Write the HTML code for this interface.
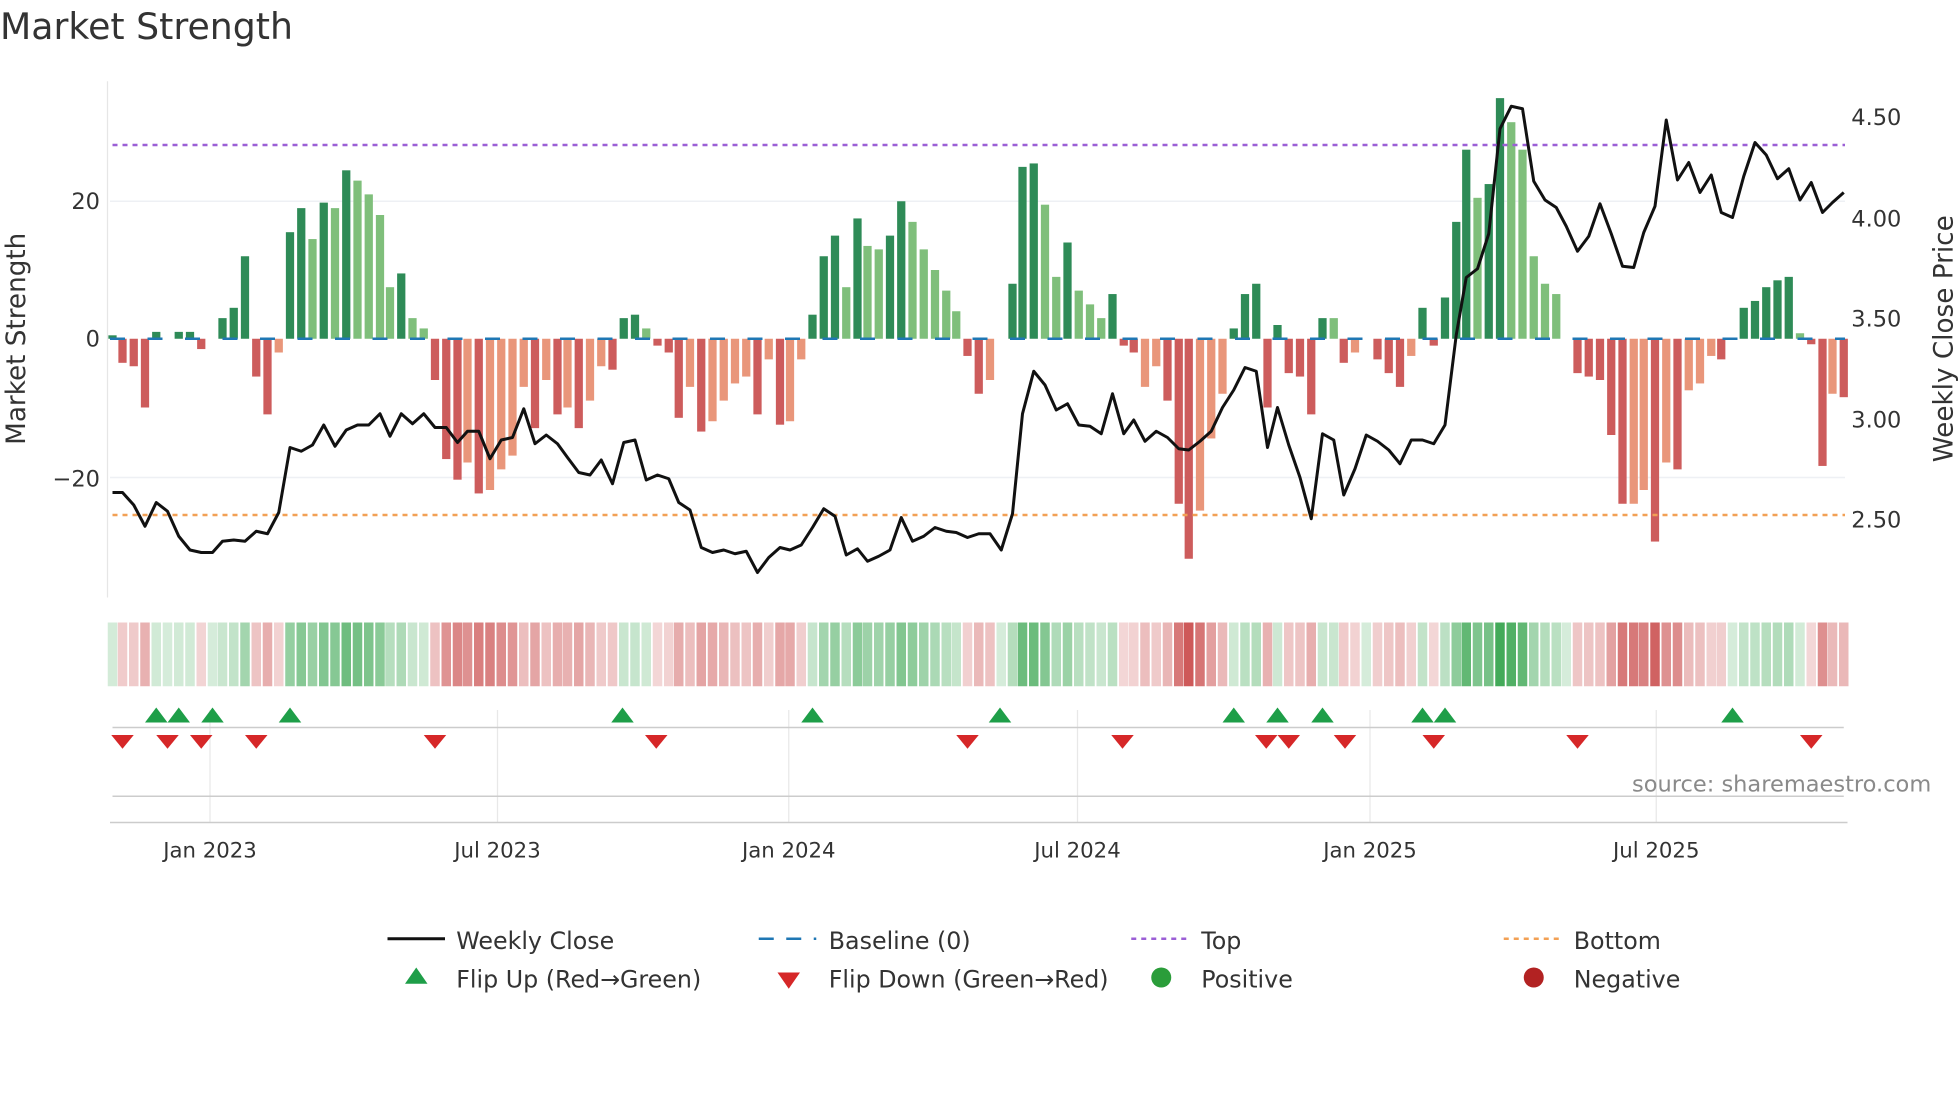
<!DOCTYPE html>
<html><head><meta charset="utf-8"><style>
html,body{margin:0;padding:0;background:#fff;}
svg{display:block;font-family:"DejaVu Sans","Liberation Sans",sans-serif;}
</style></head><body>
<svg id="s" width="1960" height="1102" viewBox="0 0 1568 881.6" xmlns="http://www.w3.org/2000/svg">
<rect width="1568" height="882" fill="#fff"/>
<text x="0" y="31" font-size="29" fill="#333">Market Strength</text>
<line x1="86" y1="65" x2="86" y2="478" stroke="#e6e6e6" stroke-width="1"/>
<line x1="88" y1="161" x2="1476" y2="161" stroke="#eef0f4" stroke-width="1.2"/>
<line x1="88" y1="382" x2="1476" y2="382" stroke="#eef0f4" stroke-width="1.2"/>
<g id="bars"></g>
<line x1="88" y1="271" x2="1476" y2="271" stroke="#1f77b4" stroke-width="2" stroke-dasharray="12,18"/>
<line x1="90" y1="116" x2="1476" y2="116" stroke="#9b5fd6" stroke-width="2" stroke-dasharray="4,4"/>
<line x1="90" y1="412" x2="1476" y2="412" stroke="#f2a055" stroke-width="2" stroke-dasharray="4,4"/>
<polyline id="price" fill="none" stroke="#111" stroke-width="2.4" stroke-linejoin="round"/>
<g font-size="18" fill="#333">
<text x="80" y="167" text-anchor="end">20</text>
<text x="80" y="277" text-anchor="end">0</text>
<text x="80" y="389" text-anchor="end">−20</text>
<text x="1481" y="100">4.50</text>
<text x="1481" y="181">4.00</text>
<text x="1481" y="261">3.50</text>
<text x="1481" y="342">3.00</text>
<text x="1481" y="422">2.50</text>
</g>
<text transform="translate(20,271) rotate(-90)" text-anchor="middle" font-size="21" fill="#333">Market Strength</text>
<text transform="translate(1562,271) rotate(-90)" text-anchor="middle" font-size="21" fill="#333">Weekly Close Price</text>
<g id="heat"></g>
<g stroke="#e8e8e8" stroke-width="1">
<line x1="168" y1="568" x2="168" y2="658"/><line x1="398" y1="568" x2="398" y2="658"/>
<line x1="631" y1="568" x2="631" y2="658"/><line x1="862" y1="568" x2="862" y2="658"/>
<line x1="1096" y1="568" x2="1096" y2="658"/><line x1="1325" y1="568" x2="1325" y2="658"/>
</g>
<line x1="90" y1="582" x2="1475" y2="582" stroke="#ccc" stroke-width="1.2"/>
<line x1="90" y1="637" x2="1475" y2="637" stroke="#ccc" stroke-width="1.2"/>
<line x1="88" y1="658" x2="1478" y2="658" stroke="#ccc" stroke-width="1.2"/>
<g id="flips"></g>
<text x="1545" y="633" text-anchor="end" font-size="18" fill="#8a8a8a">source: sharemaestro.com</text>
<g font-size="17" fill="#333" text-anchor="middle">
<text x="168" y="686">Jan 2023</text><text x="398" y="686">Jul 2023</text>
<text x="631" y="686">Jan 2024</text><text x="862" y="686">Jul 2024</text>
<text x="1096" y="686">Jan 2025</text><text x="1325" y="686">Jul 2025</text>
</g>
<g font-size="19" fill="#333">
<line x1="310" y1="751" x2="356" y2="751" stroke="#111" stroke-width="2.4"/>
<text x="365" y="759">Weekly Close</text>
<line x1="607" y1="751" x2="653" y2="751" stroke="#1f77b4" stroke-width="2" stroke-dasharray="12,10"/>
<text x="663" y="759">Baseline (0)</text>
<line x1="905" y1="751" x2="951" y2="751" stroke="#9b5fd6" stroke-width="2" stroke-dasharray="4,4"/>
<text x="961" y="759">Top</text>
<line x1="1203" y1="751" x2="1249" y2="751" stroke="#f2a055" stroke-width="2" stroke-dasharray="4,4"/>
<text x="1259" y="759">Bottom</text>
<polygon points="333,774 342,787 324,787" fill="#1e9e48"/>
<text x="365" y="790">Flip Up (Red→Green)</text>
<polygon points="622,778 640,778 631,791" fill="#d62728"/>
<text x="663" y="790">Flip Down (Green→Red)</text>
<circle cx="929" cy="782" r="8" fill="#2a9d3a"/>
<text x="961" y="790">Positive</text>
<circle cx="1227" cy="782" r="8" fill="#b22222"/>
<text x="1259" y="790">Negative</text>
</g>
</svg>
<script>
var B=[[90,.5,'d'],[98,-3.5,'r'],[107,-4,'r'],[116,-10,'r'],[125,1,'d'],[134,0,'d'],[143,1,'d'],[152,1,'d'],[161,-1.5,'r'],[170,0,'l'],[178,3,'d'],[187,4.5,'d'],[196,12,'d'],[205,-5.5,'r'],[214,-11,'r'],[223,-2,'s'],[232,15.5,'d'],[241,19,'d'],[250,14.5,'l'],[259,19.8,'d'],[268,19,'l'],[277,24.5,'d'],[286,23,'l'],[295,21,'l'],[304,18,'l'],[312,7.5,'l'],[321,9.5,'d'],[330,3,'l'],[339,1.5,'l'],[348,-6,'r'],[357,-17.5,'r'],[366,-20.5,'r'],[374,-18,'s'],[383,-22.5,'r'],[392,-22,'s'],[401,-19,'s'],[410,-17,'s'],[419,-7,'s'],[428,-13,'r'],[437,-6,'s'],[446,-11,'r'],[454,-10,'s'],[463,-13,'r'],[472,-9,'s'],[481,-4,'s'],[490,-4.5,'r'],[499,3,'d'],[508,3.5,'d'],[517,1.5,'l'],[526,-1,'r'],[535,-2,'r'],[543,-11.5,'r'],[552,-7,'s'],[561,-13.5,'r'],[570,-12,'s'],[579,-9,'s'],[588,-6.5,'s'],[597,-5.5,'s'],[606,-11,'r'],[615,-3,'s'],[624,-12.5,'r'],[632,-12,'s'],[641,-3,'s'],[650,3.5,'d'],[659,12,'d'],[668,15,'d'],[677,7.5,'l'],[686,17.5,'d'],[694,13.5,'l'],[703,13,'l'],[712,15,'d'],[721,20,'d'],[730,17,'l'],[739,13,'l'],[748,10,'l'],[757,7,'l'],[765,4,'l'],[774,-2.5,'r'],[783,-8,'r'],[792,-6,'s'],[801,0,'s'],[810,8,'d'],[818,25,'d'],[827,25.5,'d'],[836,19.5,'l'],[845,9,'l'],[854,14,'d'],[863,7,'l'],[872,5,'l'],[881,3,'l'],[890,6.5,'d'],[899,-1,'r'],[907,-2,'r'],[916,-7,'s'],[925,-4,'s'],[934,-9,'r'],[943,-24,'r'],[951,-32,'r'],[960,-25,'s'],[969,-14.5,'s'],[978,-8,'s'],[987,1.5,'d'],[996,6.5,'d'],[1005,8,'d'],[1014,-10,'r'],[1022,2,'d'],[1031,-5,'r'],[1040,-5.5,'r'],[1049,-11,'r'],[1058,3,'d'],[1067,3,'l'],[1075,-3.5,'r'],[1084,-2,'s'],[1093,0,'s'],[1102,-3,'r'],[1111,-5,'r'],[1120,-7,'r'],[1129,-2.5,'s'],[1138,4.5,'d'],[1147,-1,'r'],[1156,6,'d'],[1165,17,'d'],[1173,27.5,'d'],[1182,20.5,'l'],[1191,22.5,'d'],[1200,35,'d'],[1209,31.5,'l'],[1218,27.5,'l'],[1227,12,'l'],[1236,8,'l'],[1245,6.5,'l'],[1253,0,'l'],[1262,-5,'r'],[1271,-5.5,'r'],[1280,-6,'r'],[1289,-14,'r'],[1298,-24,'r'],[1307,-24,'s'],[1315,-22,'s'],[1324,-29.5,'r'],[1333,-18,'s'],[1342,-19,'r'],[1351,-7.5,'s'],[1360,-6.5,'s'],[1369,-2.5,'s'],[1377,-3,'r'],[1386,0,'d'],[1395,4.5,'d'],[1404,5.5,'d'],[1413,7.5,'d'],[1422,8.5,'d'],[1431,9,'d'],[1440,.8,'l'],[1449,-.8,'r'],[1458,-18.5,'r'],[1466,-8,'s'],[1475,-8.5,'r']];
var C={d:'#2e8b57',l:'#7fbf7b',r:'#cd5c5c',s:'#e9967a'};
var NS='http://www.w3.org/2000/svg',bars=document.getElementById('bars'),heat=document.getElementById('heat');
function R(g,x,y,w,h,f){var r=document.createElementNS(NS,'rect');r.setAttribute('x',x);r.setAttribute('y',y);r.setAttribute('width',w);r.setAttribute('height',h);r.setAttribute('fill',f);g.appendChild(r);}
B.forEach(function(b){var h=Math.abs(b[1])*5.5;if(h>0)R(bars,b[0]-3.3,b[1]>0?271-h:271,6.6,h,C[b[2]]);
var v=b[1],col;
if(v>=0){col='rgba(46,160,70,'+(0.2+0.7*Math.min(1,v/35))+')';}else{col='rgba(200,70,70,'+(0.2+0.7*Math.min(1,-v/32))+')';}
R(heat,b[0]-3.8,498,7.6,51,col);});
var P=[[90,394],[98,394],[107,404],[116,421],[125,402],[134,409],[143,429],[152,440],[161,442],[170,442],[178,433],[187,432],[196,433],[205,425],[214,427],[223,410],[232,358],[241,361],[250,356],[259,340],[268,357],[277,344],[286,340],[295,340],[304,331],[312,349],[321,331],[330,339],[339,331],[348,342],[357,342],[366,354],[374,345],[383,345],[392,367],[401,352],[410,350],[419,327],[428,355],[437,348],[446,355],[454,366],[463,378],[472,380],[481,368],[490,387],[499,354],[508,352],[517,384],[526,380],[535,383],[543,402],[552,408],[561,438],[570,442],[579,440],[588,443],[597,441],[606,458],[615,446],[624,438],[632,440],[641,436],[650,422],[659,407],[668,413],[677,444],[686,439],[694,449],[703,445],[712,440],[721,414],[730,433],[739,429],[748,422],[757,425],[765,426],[774,430],[783,427],[792,427],[801,440],[810,411],[818,331],[827,297],[836,308],[845,328],[854,323],[863,340],[872,341],[881,347],[890,315],[899,347],[907,336],[916,353],[925,345],[934,350],[943,359],[951,360],[960,353],[969,345],[978,326],[987,312],[996,294],[1005,297],[1014,358],[1022,326],[1031,356],[1040,382],[1049,415],[1058,347],[1067,352],[1075,396],[1084,375],[1093,348],[1102,353],[1111,360],[1120,371],[1129,352],[1138,352],[1147,355],[1156,340],[1165,268],[1173,222],[1182,215],[1191,187],[1200,103],[1209,85],[1218,87],[1227,145],[1236,160],[1245,166],[1253,181],[1262,201],[1271,189],[1280,163],[1289,187],[1298,213],[1307,214],[1315,186],[1324,165],[1333,96],[1342,144],[1351,130],[1360,154],[1369,140],[1377,170],[1386,174],[1395,141],[1404,114],[1413,124],[1422,143],[1431,135],[1440,160],[1449,146],[1458,170],[1466,162],[1475,154]];
document.getElementById('price').setAttribute('points',P.map(function(p){return p.join(',')}).join(' '));
var fl=document.getElementById('flips');
function T(pts,f){var p=document.createElementNS(NS,'polygon');p.setAttribute('points',pts);p.setAttribute('fill',f);fl.appendChild(p);}
[125,143,170,232,498,650,800,987,1022,1058,1138,1156,1386].forEach(function(x){T(x+',566 '+(x+9)+',578 '+(x-9)+',578','#1e9e48');});
[98,134,161,205,348,525,774,898,1013,1031,1076,1147,1262,1449].forEach(function(x){T((x-9)+',588 '+(x+9)+',588 '+x+',599','#d62728');});
</script>
</body></html>
